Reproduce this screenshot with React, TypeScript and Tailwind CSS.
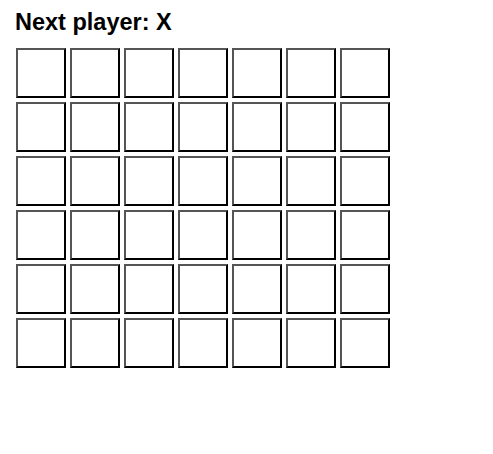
export default function App() {
  const cells = Array.from({ length: 42 });
  return (
    <div className="min-h-screen bg-white pl-4 pt-2 font-['Liberation_Sans',Arial,sans-serif] text-black">
      <h2 className="-ml-px text-[23.5px] font-bold leading-[28px]">Next player: X</h2>
      <div className="mt-3 grid w-fit grid-cols-[repeat(7,50px)] gap-1">
        {cells.map((_, i) => (
          <button
            key={i}
            className="h-[50px] w-[50px] border-2 border-t-[#555] border-l-[#555] border-r-black border-b-black bg-white"
          />
        ))}
      </div>
    </div>
  );
}
